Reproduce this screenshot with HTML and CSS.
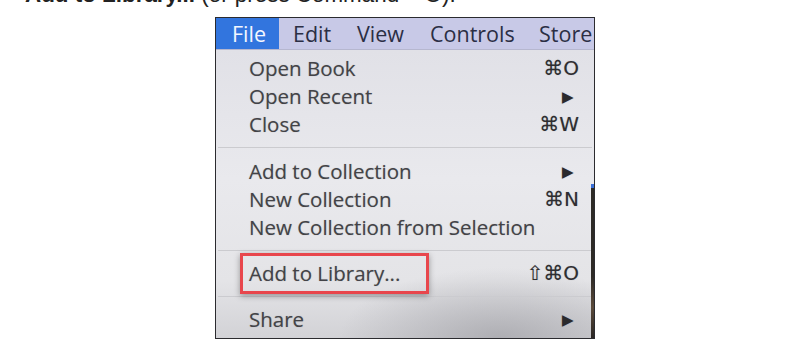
FILE: index.html
```html
<!DOCTYPE html>
<html>
<head>
<meta charset="utf-8">
<link rel="stylesheet" href="styles.css">
</head>
<body>
<p class="caption"><b>Add to Library...</b> (or press Command + O).</p>
<div class="shot">
  <div class="menubar">
    <span class="mb-item active">File</span>
    <span class="mb-item w-edit">Edit</span>
    <span class="mb-item w-view">View</span>
    <span class="mb-item w-controls">Controls</span>
    <span class="mb-item">Store</span>
  </div>
  <div class="menu">
    <div class="row"><span>Open Book</span><span class="key">⌘O</span></div>
    <div class="row"><span>Open Recent</span><span class="arrow">▶</span></div>
    <div class="row"><span>Close</span><span class="key">⌘W</span></div>
    <div class="sep"></div>
    <div class="row"><span>Add to Collection</span><span class="arrow">▶</span></div>
    <div class="row"><span>New Collection</span><span class="key">⌘N</span></div>
    <div class="row"><span>New Collection from Selection</span></div>
    <div class="sep tight"></div>
    <div class="row"><span>Add to Library...</span><span class="key">⇧⌘O</span></div>
    <div class="sep tight"></div>
    <div class="row"><span>Share</span><span class="arrow">▶</span></div>
    <div class="highlight"></div>
    <div class="edge"></div>
  </div>
</div>
</body>
</html>
```
FILE: styles.css
```css
html, body {
  margin: 0;
  background: #ffffff;
}
body {
  font-family: "Liberation Sans", Arial, sans-serif;
  width: 800px;
  height: 360px;
  overflow: hidden;
}
.caption {
  margin: -15px 0 0 25px;
  height: 20px;
  line-height: 20px;
  font-size: 22.4px;
  color: #222;
  white-space: nowrap;
}
.shot {
  margin: 12px 0 0 215px;
  width: 378px;
  height: 320px;
  border: 1px solid #2b2b2f;
  display: flex;
  flex-direction: column;
  overflow: hidden;
  font-family: "Open Sans", "Noto Sans", sans-serif;
}
.menubar {
  height: 31px;
  flex: none;
  background: #c8c9e7;
  display: flex;
  align-items: center;
  color: #2b2e44;
  font-size: 21.5px;
  border-bottom: 1px solid #b6b7cf;
  white-space: nowrap;
}
.mb-item {
  height: 31px;
  line-height: 31px;
  flex: none;
}
.mb-item.active {
  background: #3275de;
  color: #f4f7ff;
  width: 47px;
  padding-left: 16px;
  margin-right: 14px;
}
.w-edit { width: 64px; }
.w-view { width: 73px; }
.w-controls { width: 109px; }
.menu {
  flex: 1;
  position: relative;
  padding: 4px 15px 0 33px;
  background:
    radial-gradient(ellipse 160px 70px at 75% 100%, rgba(150,150,156,0.6), rgba(150,150,156,0) 100%),
    linear-gradient(to bottom, #e1e1e7 0%, #e9e9ed 45%, #e4e4e7 80%, #d2d2d6 100%);
  color: #434347;
  font-size: 20.5px;
}
.row {
  height: 28px;
  display: flex;
  align-items: center;
  justify-content: space-between;
  text-shadow: 0 0 1px rgba(60,60,64,0.35);
  white-space: nowrap;
}
.key {
  font-family: "DejaVu Sans", "Open Sans", sans-serif;
  font-size: 20px;
  color: #2e2e31;
}
.arrow {
  font-size: 15px;
  margin-right: 5px;
  color: #2a2a2d;
}
.sep {
  height: 1px;
  background: #cbcbcf;
  margin: 9px -13px 9px -31px;
}
.sep.tight {
  margin-bottom: 8px;
}
.highlight {
  position: absolute;
  left: 24px;
  top: 203px;
  width: 183px;
  height: 35px;
  border: 3px solid #e8464c;
  box-shadow: 0 2px 6px rgba(0,0,0,0.35);
}
.edge {
  position: absolute;
  right: 0;
  top: 134px;
  bottom: 0;
  width: 3px;
  background: linear-gradient(to bottom, #3a6fd8 0 4px, #2d2a26 4px 60%, #5a4a3a 80%, #2a2624 100%);
}
```
